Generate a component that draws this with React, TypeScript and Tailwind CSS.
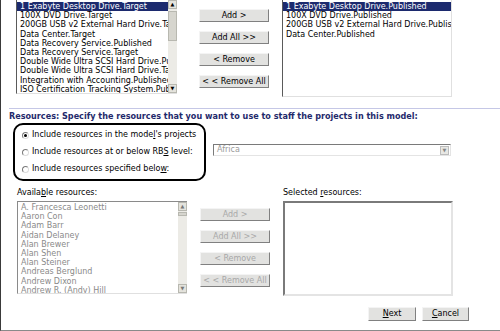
import React from 'react'

const topLeft = [
  '1 Exabyte Desktop Drive.Target',
  '100X DVD Drive.Target',
  '200GB USB v2 External Hard Drive.Target',
  'Data Center.Target',
  'Data Recovery Service.Published',
  'Data Recovery Service.Target',
  'Double Wide Ultra SCSI Hard Drive.Published',
  'Double Wide Ultra SCSI Hard Drive.Target',
  'Integration with Accounting.Published',
  'ISO Certification Tracking System.Published',
]

const topRight = [
  '1 Exabyte Desktop Drive.Published',
  '100X DVD Drive.Published',
  '200GB USB v2 External Hard Drive.Published',
  'Data Center.Published',
]

const people = [
  'A. Francesca Leonetti',
  'Aaron Con',
  'Adam Barr',
  'Aidan Delaney',
  'Alan Brewer',
  'Alan Shen',
  'Alan Steiner',
  'Andreas Berglund',
  'Andrew Dixon',
  'Andrew R. (Andy) Hill',
]

function Scrollbar({ disabled, thumb }: { disabled?: boolean; thumb: string }) {
  const arrow = disabled ? 'text-[#777]' : 'text-black'
  return (
    <div className="w-[9px] h-full flex flex-col bg-[#ecebe6] shrink-0">
      <div className={`h-[9px] bg-[#e4e3dc] border border-[#b8b8b0] flex items-center justify-center text-[5px] leading-none ${arrow}`}>▲</div>
      <div className="flex-1 relative">
        <div className={`absolute left-0 right-0 bg-[#d6d5ce] border border-[#b8b8b0] ${thumb}`} />
      </div>
      <div className={`h-[9px] bg-[#e4e3dc] border border-[#b8b8b0] flex items-center justify-center text-[5px] leading-none ${arrow}`}>▼</div>
    </div>
  )
}

function Btn({ label, disabled }: { label: React.ReactNode; disabled?: boolean }) {
  return (
    <div
      className={`w-[70px] h-[13px] flex items-center justify-center border border-t-[#f4f4f4] border-l-[#f4f4f4] border-r-[#808080] border-b-[#808080] bg-[#e2e2e0] leading-none ${
        disabled ? 'text-[#a8a8a8]' : 'text-black'
      }`}
    >
      {label}
    </div>
  )
}

export default function App() {
  return (
    <div
      className="w-[500px] h-[331px] bg-white border-l border-l-[#3a3a3a] border-b border-b-[#8a8a8a] overflow-hidden text-[8px] leading-[9.2px] text-black"
      style={{ fontFamily: '"DejaVu Sans", Verdana, sans-serif' }}
    >
      {/* top picker */}
      <div className="flex items-start h-[98px]">
        <div className="ml-[15px] w-[161px] h-[94px] flex border-l border-l-[#5a5a5a] border-b border-b-[#e0e0e0] bg-white">
          <div className="flex-1 min-w-0 overflow-hidden pt-[2px] whitespace-nowrap">
            {topLeft.map((t, i) => (
              <div key={t} className={`pl-[3px] h-[9.2px] ${i === 0 ? 'bg-[#1c2a6e] text-white' : ''}`}>
                {t}
              </div>
            ))}
          </div>
          <Scrollbar thumb="top-[2px] h-[30px]" />
        </div>
        <div className="ml-[22px] mt-[9px] flex flex-col gap-[9px]">
          <Btn label="Add >" />
          <Btn label="Add All >>" />
          <Btn label="< Remove" />
          <Btn label="< < Remove All" />
        </div>
        <div className="ml-[13px] w-[170px] h-[97px] border-l border-l-[#5a5a5a] border-b border-b-[#e0e0e0] border-r border-r-[#e0e0e0] overflow-hidden whitespace-nowrap pt-[2px]">
          {topRight.map((t, i) => (
            <div key={t} className={`pl-[3px] h-[9.2px] ${i === 0 ? 'bg-[#1c2a6e] text-white' : ''}`}>
              {t}
            </div>
          ))}
        </div>
      </div>

      <div className="mt-[10px] ml-[8px] h-px bg-[#c5c7e6]" />

      <div className="ml-[8px] mt-[2px] font-bold text-[8.1px] text-[#1f2a6b] leading-[10px] whitespace-nowrap">
        Resources: Specify the resources that you want to use to staff the projects in this model:
      </div>

      {/* radio options */}
      <div className="flex items-start mt-[2px]">
        <div className="ml-[12px] w-[193px] h-[58px] border-2 border-black rounded-[10px] pl-[7px] pt-[5px] flex flex-col gap-[7px]">
          {[
            <>Include resources in the mode<u>l</u>'s projects</>,
            <>Include resources at or below RB<u>S</u> level:</>,
            <>Include resources specified belo<u>w</u>:</>,
          ].map((label, i) => (
            <div key={i} className="flex items-center h-[10px] whitespace-nowrap">
              <span className="w-[7px] h-[7px] rounded-full border border-[#7a7a7a] border-b-[#ddd] border-r-[#ddd] bg-white flex items-center justify-center mr-[3px]">
                {i === 0 && <span className="w-[3px] h-[3px] rounded-full bg-black" />}
              </span>
              <span>{label}</span>
            </div>
          ))}
        </div>
        <div className="ml-[7px] mt-[21px] w-[238px] h-[12px] flex items-center border border-t-[#7a7a7a] border-l-[#7a7a7a] border-r-[#e4e4e4] border-b-[#e4e4e4] bg-white">
          <span className="flex-1 pl-[3px] text-[#9a9a9a]">Africa</span>
          <span className="w-[9px] h-[9px] mr-[1px] bg-[#e8e8e4] border border-[#bcbcbc] flex items-center justify-center text-[5px] text-[#888] leading-none">▼</span>
        </div>
      </div>

      {/* resource picker */}
      <div className="flex mt-[7px]">
        <div className="ml-[16px] w-[170px]">
          <div className="h-[10px] leading-[10px]">
            Availa<u>b</u>le resources:
          </div>
          <div className="mt-[3px] w-[170px] h-[93px] flex border-l border-l-[#8a8a8a] border-t border-t-[#8a8a8a] border-b border-b-[#e0e0e0] bg-white">
            <div className="flex-1 min-w-0 overflow-hidden pt-[1px] whitespace-nowrap text-[#8a8a8a]">
              {people.map((p) => (
                <div key={p} className="pl-[3px] h-[9.2px]">
                  {p}
                </div>
              ))}
            </div>
            <Scrollbar disabled thumb="top-[1px] h-[4px]" />
          </div>
        </div>
        <div className="ml-[13px] mt-[20px] flex flex-col gap-[9px]">
          <Btn label="Add >" disabled />
          <Btn label="Add All >>" disabled />
          <Btn label="< Remove" disabled />
          <Btn label="< < Remove All" disabled />
        </div>
        <div className="ml-[13px] w-[170px]">
          <div className="h-[10px] leading-[10px]">
            Selected <u>r</u>esources:
          </div>
          <div className="mt-[3px] h-[95px] border-2 border-t-[#7a7a7a] border-l-[#7a7a7a] border-r-[#e4e4e4] border-b-[#e4e4e4] bg-white" />
        </div>
      </div>

      <div className="flex justify-end mt-[11px] mr-[31px] gap-[6px]">
        <div className="w-[48px] h-[14px] flex items-center justify-center border border-t-[#f4f4f4] border-l-[#f4f4f4] border-r-[#808080] border-b-[#808080] bg-[#e2e2e0] leading-none">
          <span><u>N</u>ext</span>
        </div>
        <div className="w-[47px] h-[14px] flex items-center justify-center border border-t-[#f4f4f4] border-l-[#f4f4f4] border-r-[#808080] border-b-[#808080] bg-[#e2e2e0] leading-none">
          <span><u>C</u>ancel</span>
        </div>
      </div>
    </div>
  )
}
